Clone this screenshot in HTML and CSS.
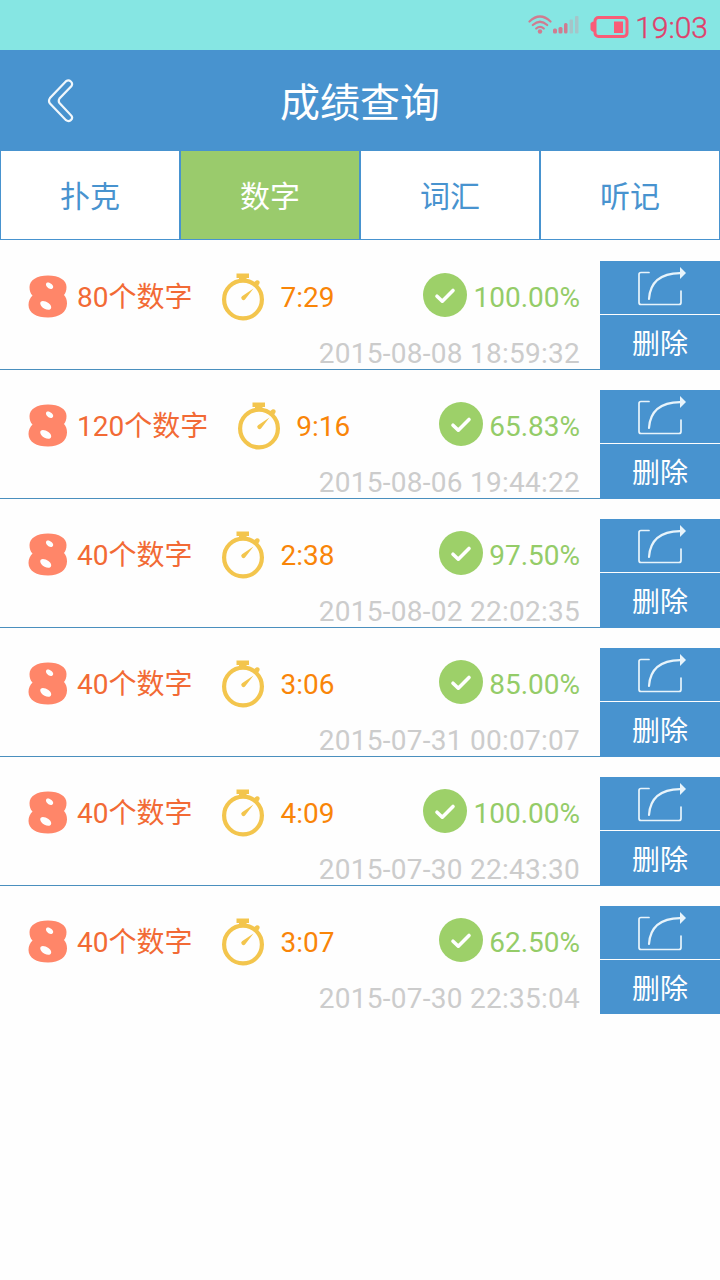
FILE: index.html
```html
<!DOCTYPE html>
<html lang="zh-CN">
<head>
    <meta charset="UTF-8">
    <meta name="viewport" content="width=device-width, initial-scale=1.0">
    <title>成绩查询</title>
    <link rel="stylesheet" href="styles.css">
</head>
<body>
    <!-- shared icons -->
    <svg class="icon-defs" width="0" height="0">
        <symbol id="icon-eight" viewBox="0 0 40 43">
            <path fill-rule="evenodd" d="M20 .5C31 .5 38.500 5 38.500 12C38.500 16 37.500 18 36 20C38 22 39 25 39 28.500C39 37 31.500 42.500 20 42.500C8.500 42.500 .5 38 .5 30C.5 26 2 23 4.500 20.500C2.500 18.500 1.500 16 1.500 12C1.500 5 9 .5 20 .5ZM18.700 7.800C17 9.500 18.500 11.800 20.500 13.200C22.500 14.500 24.800 14.300 25.200 12C25.500 9.500 20.800 6.500 18.700 7.800ZM12.800 26.700C11.200 28.500 13.200 31.800 16.500 33.800C20 35.500 23 35 23.200 32.500C23.500 28.500 15.500 24.500 12.800 26.700Z"/>
        </symbol>
        <symbol id="icon-timer" viewBox="0 0 42 48">
            <circle cx="21" cy="26.500" r="18.900" fill="none" stroke="currentColor" stroke-width="4.200"/>
            <path d="M14.500 .5h12.500v4.500h-2.500v4h-7.500v-4H14.500zM31 10l2.500-2 .8-.5c1.800-.8 4 .8 3.200 2.800l-.5 1-1.500 2.200z"/>
            <path d="M31.500 15.500L23.200 26.200a2.200 2.200 0 1 1-3.200-3z"/>
        </symbol>
        <symbol id="icon-check" viewBox="0 0 44 44">
            <circle cx="22" cy="22" r="22"/>
            <path d="M14 23.200l5.300 5L30 17.500" fill="none" stroke="#fff" stroke-width="3.600" stroke-linecap="round" stroke-linejoin="round"/>
        </symbol>
        <symbol id="icon-share" viewBox="0 0 50 40">
            <g fill="none" stroke="currentColor" stroke-width="1.700" stroke-linecap="round" stroke-linejoin="round">
                <path d="M12 5.500H4q-2 0-2 2v28q0 2 2 2h38q2 0 2-2V24"/>
                <path d="M12 32C13 17 22 6.500 43 6.200" stroke-width="2.200"/>
            </g>
            <path d="M43 0L49 6L43 12z"/>
        </symbol>
    </svg>

    <div class="screen">
        <div class="status-bar">
            <svg class="wifi" width="24" height="20" viewBox="0 0 24 20">
                <g fill="none" stroke="currentColor" stroke-width="2.200" stroke-linecap="round">
                    <path d="M1.500 6.500Q12-3.500 22.500 6.500"/>
                    <path d="M4.800 10Q12 3.500 19.200 10"/>
                    <path d="M8.200 13.500Q12 10.200 15.800 13.500"/>
                </g>
                <circle cx="12" cy="16.500" r="2.200"/>
            </svg>
            <svg class="signal" width="26" height="20" viewBox="0 0 26 20">
                <rect x="0" y="13.500" width="4" height="5" rx="1.500"/>
                <rect x="5.500" y="12" width="4" height="6.500" rx="1.500"/>
                <rect x="11" y="8" width="3.500" height="10.500" rx="1.500"/>
                <rect class="off" x="16.500" y="4.500" width="3.500" height="14" rx="1"/>
                <rect class="off" x="22" y="1" width="3.500" height="17.500" rx="1"/>
            </svg>
            <svg class="battery" width="39" height="24" viewBox="0 0 39 24">
                <rect x="5" y="2.500" width="32" height="19" rx="3.500" fill="none" stroke="currentColor" stroke-width="3"/>
                <path d="M4 6.500Q.5 7 .5 9v5q0 2 3.500 3z"/>
                <rect x="24" y="6.500" width="9" height="11.500"/>
            </svg>
            <span class="clock">19:03</span>
        </div>

        <div class="header">
            <a class="back">
                <svg width="28" height="46" viewBox="0 0 28 46">
                    <path d="M19 3.200L3 20Q1 23 3 25.500L19 42.200C22.500 44.500 26.500 41 24.500 37.800L12.500 25Q11 23 12.500 20.500L24.500 8C26.500 4.500 22.500 1 19 3.200Z" fill="none" stroke="#f0f7fc" stroke-width="2.200"/>
                </svg>
            </a>
            <h1 class="title">成绩查询</h1>
        </div>

        <div class="tabs">
            <div class="tab">扑克</div>
            <div class="tab active">数字</div>
            <div class="tab">词汇</div>
            <div class="tab">听记</div>
        </div>

        <div class="records">
            <div class="record">
                <div class="info">
                    <div class="summary">
                        <svg class="eight"><use href="#icon-eight"/></svg>
                        <span class="count">80个数字</span>
                        <svg class="timer"><use href="#icon-timer"/></svg>
                        <span class="time">7:29</span>
                        <svg class="check"><use href="#icon-check"/></svg>
                        <span class="rate">100.00%</span>
                    </div>
                    <div class="date">2015-08-08 18:59:32</div>
                </div>
                <div class="actions">
                    <div class="share"><svg><use href="#icon-share"/></svg></div>
                    <div class="delete">删除</div>
                </div>
            </div>

            <div class="record">
                <div class="info">
                    <div class="summary">
                        <svg class="eight"><use href="#icon-eight"/></svg>
                        <span class="count">120个数字</span>
                        <svg class="timer"><use href="#icon-timer"/></svg>
                        <span class="time">9:16</span>
                        <svg class="check"><use href="#icon-check"/></svg>
                        <span class="rate">65.83%</span>
                    </div>
                    <div class="date">2015-08-06 19:44:22</div>
                </div>
                <div class="actions">
                    <div class="share"><svg><use href="#icon-share"/></svg></div>
                    <div class="delete">删除</div>
                </div>
            </div>

            <div class="record">
                <div class="info">
                    <div class="summary">
                        <svg class="eight"><use href="#icon-eight"/></svg>
                        <span class="count">40个数字</span>
                        <svg class="timer"><use href="#icon-timer"/></svg>
                        <span class="time">2:38</span>
                        <svg class="check"><use href="#icon-check"/></svg>
                        <span class="rate">97.50%</span>
                    </div>
                    <div class="date">2015-08-02 22:02:35</div>
                </div>
                <div class="actions">
                    <div class="share"><svg><use href="#icon-share"/></svg></div>
                    <div class="delete">删除</div>
                </div>
            </div>

            <div class="record">
                <div class="info">
                    <div class="summary">
                        <svg class="eight"><use href="#icon-eight"/></svg>
                        <span class="count">40个数字</span>
                        <svg class="timer"><use href="#icon-timer"/></svg>
                        <span class="time">3:06</span>
                        <svg class="check"><use href="#icon-check"/></svg>
                        <span class="rate">85.00%</span>
                    </div>
                    <div class="date">2015-07-31 00:07:07</div>
                </div>
                <div class="actions">
                    <div class="share"><svg><use href="#icon-share"/></svg></div>
                    <div class="delete">删除</div>
                </div>
            </div>

            <div class="record">
                <div class="info">
                    <div class="summary">
                        <svg class="eight"><use href="#icon-eight"/></svg>
                        <span class="count">40个数字</span>
                        <svg class="timer"><use href="#icon-timer"/></svg>
                        <span class="time">4:09</span>
                        <svg class="check"><use href="#icon-check"/></svg>
                        <span class="rate">100.00%</span>
                    </div>
                    <div class="date">2015-07-30 22:43:30</div>
                </div>
                <div class="actions">
                    <div class="share"><svg><use href="#icon-share"/></svg></div>
                    <div class="delete">删除</div>
                </div>
            </div>

            <div class="record">
                <div class="info">
                    <div class="summary">
                        <svg class="eight"><use href="#icon-eight"/></svg>
                        <span class="count">40个数字</span>
                        <svg class="timer"><use href="#icon-timer"/></svg>
                        <span class="time">3:07</span>
                        <svg class="check"><use href="#icon-check"/></svg>
                        <span class="rate">62.50%</span>
                    </div>
                    <div class="date">2015-07-30 22:35:04</div>
                </div>
                <div class="actions">
                    <div class="share"><svg><use href="#icon-share"/></svg></div>
                    <div class="delete">删除</div>
                </div>
            </div>
        </div>
    </div>
</body>
</html>
```
FILE: styles.css
```css
* {
    box-sizing: border-box;
}

body {
    margin: 0;
    padding: 0;
    font-family: Roboto, "Noto Sans CJK SC", sans-serif;
    background: #fff;
}

svg {
    display: block;
    flex: none;
    fill: currentColor;
}

.icon-defs {
    display: none;
}

.screen {
    width: 720px;
    height: 1280px;
    overflow: hidden;
    background: #fefefe;
}

/* status bar */
.status-bar {
    height: 50px;
    padding: 4px 12px 0 0;
    display: flex;
    justify-content: flex-end;
    align-items: center;
    background: #86e6e3;
}

.wifi {
    margin-top: -4px;
    color: #d07c90;
}

.signal {
    margin: -4px 11px 0 1px;
    color: #d07c90;
}

.signal .off {
    fill: #a5c5c9;
}

.battery {
    margin-right: 6px;
    color: #f95c78;
}

.clock {
    padding-top: 1px;
    font-size: 30px;
    font-weight: 300;
    line-height: 46px;
    color: #e0406c;
    -webkit-text-stroke: 0.4px #e0406c;
}

/* header */
.header {
    height: 100px;
    display: grid;
    grid-template-columns: 121px 1fr 121px;
    align-items: center;
    background: #4893cf;
    color: #fff;
}

.back {
    padding-top: 2px;
    display: flex;
    justify-content: center;
}

.title {
    margin: 0;
    padding-top: 7px;
    font-size: 40px;
    font-weight: 400;
    line-height: 93px;
    text-align: center;
}

/* tabs */
.tabs {
    height: 90px;
    display: flex;
    background: #4893cf;
}

.tab {
    flex: 1;
    padding-top: 3px;
    border: 1px solid #4893cf;
    background: #fff;
    color: #4893cf;
    font-size: 30px;
    line-height: 85px;
    text-align: center;
}

.tab.active {
    background: #9acb6c;
    color: #fff;
}

/* records */
.records {
    padding-top: 1px;
}

.record {
    height: 129px;
    display: flex;
}

.info {
    flex: 1;
    padding: 30px 20px 0 28px;
    border-bottom: 1px solid #4a8fbe;
}

.summary {
    height: 50px;
    display: flex;
    align-items: center;
    font-size: 28px;
    line-height: 46px;
}

.summary span {
    padding-top: 4px;
}

.eight {
    width: 40px;
    height: 43px;
    margin: 1px 9px 0 0;
    color: #ff8669;
}

.count {
    color: #f26a35;
}

.timer {
    width: 42px;
    height: 48px;
    margin: 1px 16px 0 30px;
    color: #f3c54d;
}

.time {
    color: #f98508;
}

.check {
    width: 44px;
    height: 44px;
    margin: -2px 6px 0 auto;
    color: #9dd069;
}

.rate {
    color: #94cc68;
}

.date {
    height: 40px;
    margin-top: 8px;
    color: #ccc;
    font-size: 28px;
    line-height: 50px;
    letter-spacing: 0.26px;
    text-align: right;
}

.actions {
    width: 120px;
    margin-top: 20px;
    color: #fff;
}

.share {
    height: 53px;
    margin-bottom: 1px;
    padding: 6px 0 0 37px;
    background: #4893cf;
}

.share svg {
    width: 50px;
    height: 40px;
    color: #e8f4fb;
}

.delete {
    height: 55px;
    padding-top: 4px;
    background: #4893cf;
    font-size: 28px;
    line-height: 52px;
    text-align: center;
}

.record:last-child .info {
    border-bottom: none;
}

.record:last-child .delete {
    height: 54px;
}
```
